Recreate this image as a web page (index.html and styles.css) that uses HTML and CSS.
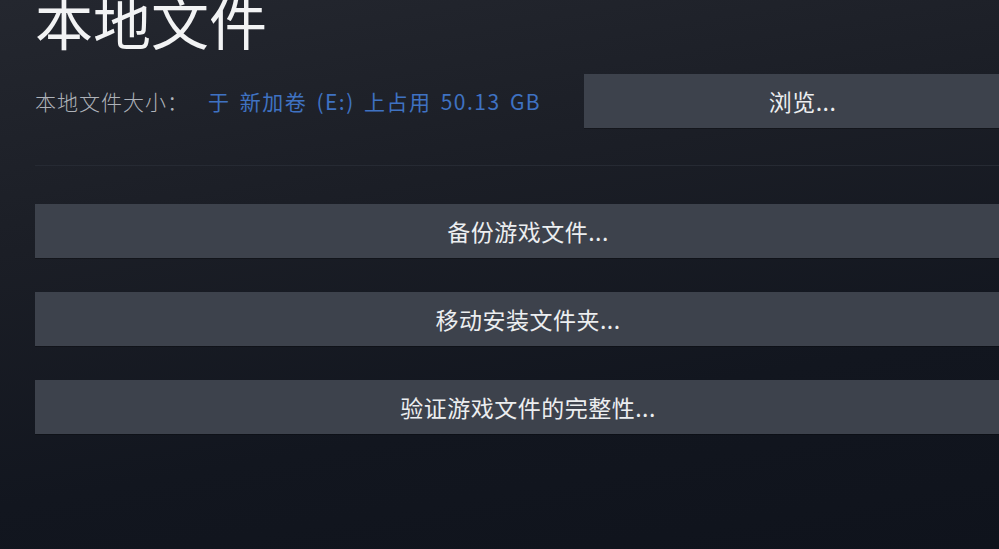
FILE: index.html
```html
<!DOCTYPE html>
<html lang="zh-CN">
<head>
<meta charset="utf-8">
<link rel="stylesheet" href="styles.css">
</head>
<body>
<main class="page">
  <h1 class="title">本地文件</h1>
  <div class="size-row">
    <span class="size-label">本地文件大小：</span>
    <span class="size-value">于 新加卷 (E:) 上占用 50.13 GB</span>
    <button class="btn btn-browse">浏览...</button>
  </div>
  <div class="divider"></div>
  <div class="actions">
    <button class="btn">备份游戏文件...</button>
    <button class="btn">移动安装文件夹...</button>
    <button class="btn">验证游戏文件的完整性...</button>
  </div>
</main>
</body>
</html>
```
FILE: styles.css
```css
html, body {
  margin: 0;
  padding: 0;
  width: 999px;
  height: 549px;
  overflow: hidden;
}
body {
  background: linear-gradient(170deg, #24272f 0%, #1b1e26 35%, #12161f 70%, #0f131c 100%);
  font-family: "Noto Sans CJK SC", "Noto Sans", sans-serif;
  color: #e8eaec;
}
.page {
  padding-left: 35px;
  width: 986px;
}
.title {
  margin: -12px 0 0 0;
  font-size: 58px;
  line-height: 64px;
  font-weight: 400;
  color: #f2f3f4;
}
.size-row {
  display: flex;
  align-items: center;
  margin-top: 22px;
  height: 54px;
}
.size-label {
  font-size: 21px;
  color: #aeb2b9;
  font-weight: 300;
  letter-spacing: 1px;
  width: 173px;
}
.size-value {
  font-size: 21px;
  color: #3f72c2;
  letter-spacing: 1.5px;
  word-spacing: 3px;
}
.btn {
  display: flex;
  align-items: center;
  justify-content: center;
  height: 54px;
  border: none;
  background: #3d424c;
  color: #eceef0;
  font-family: "Noto Sans CJK SC", "Noto Sans", sans-serif;
  font-size: 23px;
  letter-spacing: 0.5px;
  padding: 0;
  width: 100%;
  box-shadow: 0 1px 0 rgba(0,0,0,0.25);
}
.btn-browse {
  width: 437px;
  margin-left: auto;
  flex-shrink: 0;
}
.divider {
  margin-top: 37px;
  height: 1px;
  background: #262a33;
}
.actions {
  margin-top: 38px;
  display: flex;
  flex-direction: column;
  gap: 34px;
}
```
